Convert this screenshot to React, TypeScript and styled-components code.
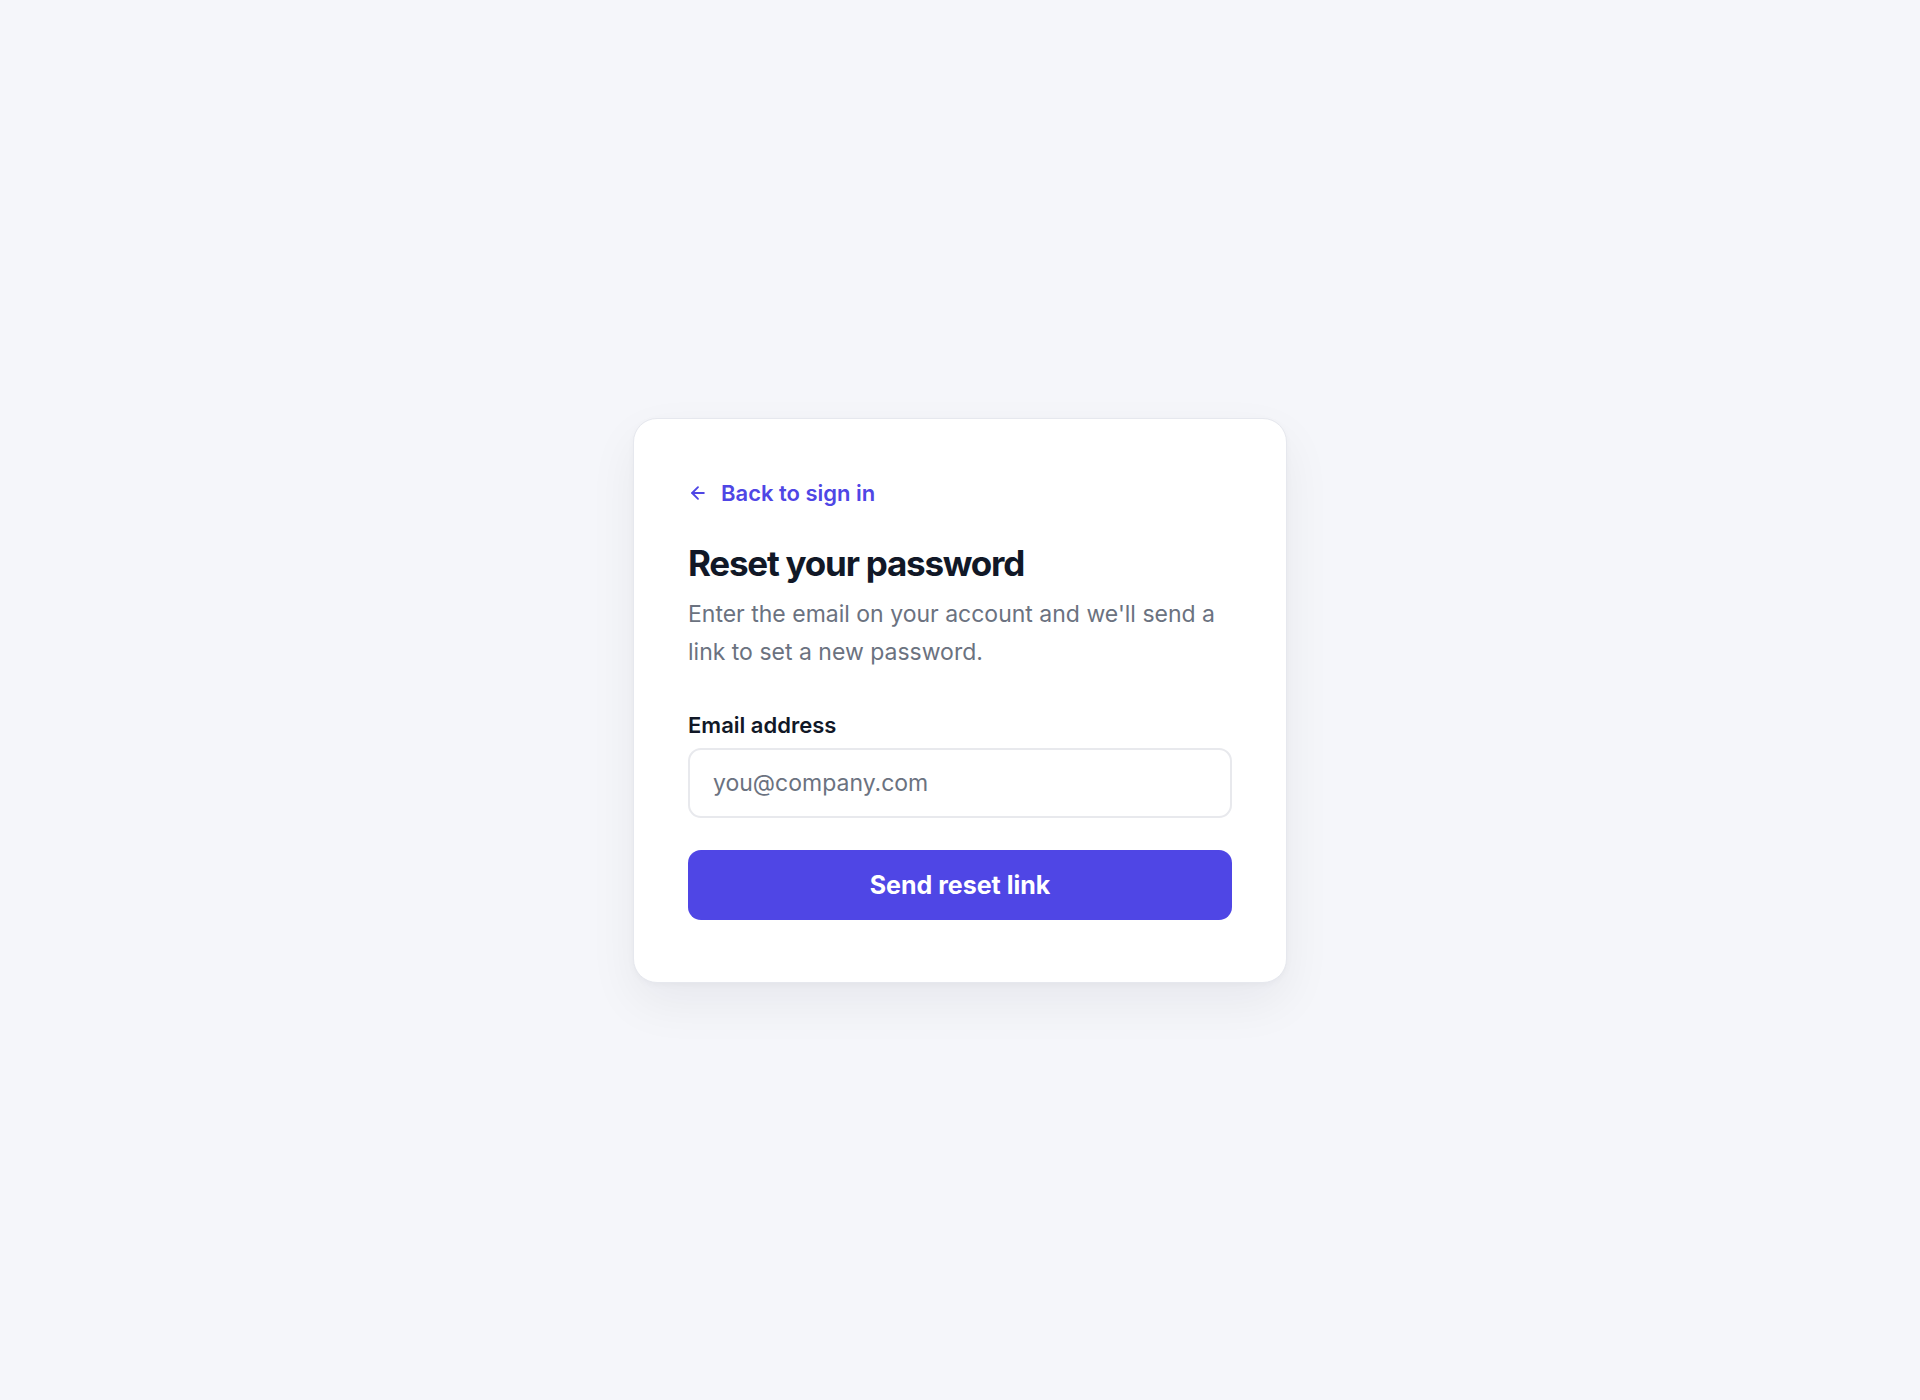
import styled, { createGlobalStyle } from "styled-components";
import { ArrowLeft } from "lucide-react";

const GlobalStyle = createGlobalStyle`
  * { box-sizing: border-box; }
  html, body {
    margin: 0;
    padding: 0;
    background: #f5f6fa;
    font-family: Inter, "Noto Sans", "Liberation Sans", sans-serif;
    -webkit-font-smoothing: antialiased;
  }
`;

const Page = styled.main`
  min-height: 1400px;
  display: flex;
  align-items: center;
  justify-content: center;
`;

const Card = styled.section`
  width: 654px;
  background: #ffffff;
  border: 1px solid #e6e8ee;
  border-radius: 24px;
  padding: 58px 54px 62px;
  box-shadow: 0 20px 50px rgba(17, 24, 39, 0.06), 0 2px 6px rgba(17, 24, 39, 0.03);
  display: flex;
  flex-direction: column;
`;

const BackLink = styled.a`
  display: inline-flex;
  align-items: center;
  gap: 13px;
  align-self: flex-start;
  color: #4f46e5;
  font-size: 22px;
  font-weight: 600;
  line-height: 32px;
  text-decoration: none;
  cursor: pointer;
`;

const Title = styled.h1`
  margin: 32px 0 0;
  font-size: 35px;
  font-weight: 700;
  line-height: 44px;
  letter-spacing: -0.035em;
  color: #111827;
`;

const Lead = styled.p`
  margin: 10px 0 0;
  font-size: 23px;
  line-height: 38px;
  color: #6b7280;
`;

const Form = styled.form`
  display: flex;
  flex-direction: column;
  margin-top: 39px;
`;

const Label = styled.label`
  font-size: 22px;
  font-weight: 600;
  line-height: 30px;
  color: #111827;
`;

const Input = styled.input`
  margin-top: 8px;
  height: 70px;
  width: 100%;
  padding: 0 23px;
  border: 2px solid #e8e9ed;
  border-radius: 13px;
  font-family: inherit;
  font-size: 23px;
  color: #111827;
  background: #ffffff;
  outline: none;

  &::placeholder {
    color: #6b7280;
  }
`;

const Submit = styled.button`
  margin-top: 32px;
  height: 70px;
  width: 100%;
  border: none;
  border-radius: 13px;
  background: #4f46e5;
  color: #ffffff;
  font-family: inherit;
  font-size: 25px;
  font-weight: 700;
  cursor: pointer;
`;

export default function App() {
  return (
    <>
      <GlobalStyle />
      <Page>
        <Card>
          <BackLink href="#">
            <ArrowLeft size={20} strokeWidth={2.25} />
            Back to sign in
          </BackLink>
          <Title>Reset your password</Title>
          <Lead>
            Enter the email on your account and we'll send a link to set a new password.
          </Lead>
          <Form onSubmit={(e) => e.preventDefault()}>
            <Label htmlFor="email">Email address</Label>
            <Input id="email" type="email" placeholder="you@company.com" />
            <Submit type="submit">Send reset link</Submit>
          </Form>
        </Card>
      </Page>
    </>
  );
}
